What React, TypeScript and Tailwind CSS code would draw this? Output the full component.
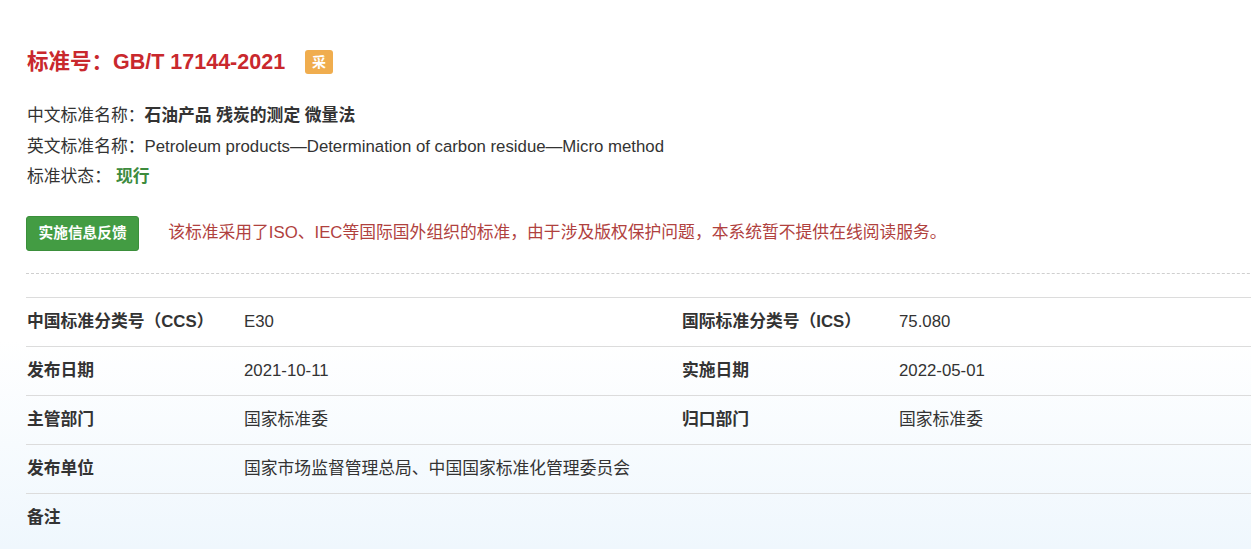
import React from "react";

const font = { fontFamily: '"Liberation Sans", Arial, "Noto Sans CJK SC", sans-serif' };

function Row({ cells }: { cells: [string, string][] }) {
  return (
    <div className="flex h-[49px] items-center border-t border-[#dcdcdc]">
      {cells.map(([k, v], i) => (
        <React.Fragment key={i}>
          <div className="w-[218px] shrink-0 pl-px font-bold text-[#333]">{k}</div>
          <div className={i === 0 && cells.length > 1 ? "w-[437px] shrink-0" : "flex-1"}>{v}</div>
        </React.Fragment>
      ))}
    </div>
  );
}

export default function App() {
  return (
    <div
      className="h-[549px] w-[1251px] overflow-hidden bg-gradient-to-b from-white from-[62%] to-[#eff7fd] text-[16.8px] text-[#333]"
      style={font}
    >
      <div className="w-[1450px] pl-[26px] pt-[47px]">
        <div className="flex h-[30px] items-center">
          <h1 className="pl-px text-[21.5px] font-bold leading-[30px] text-[#c9282d]">标准号：GB/T 17144-2021</h1>
          <span className="ml-[20px] flex h-[24px] w-[28px] items-center justify-center rounded-[3px] bg-[#f0ad4e] text-[14px] font-bold text-white">
            采
          </span>
        </div>
        <div className="mt-[24px] pl-px leading-[30.5px]">
          <div>
            中文标准名称：<span className="font-bold">石油产品 残炭的测定 微量法</span>
          </div>
          <div>英文标准名称：Petroleum products—Determination of carbon residue—Micro method</div>
          <div>
            标准状态：<span className="ml-[5px] font-bold text-[#3d8b3d]">现行</span>
          </div>
        </div>
        <div className="mt-[23px] flex items-center">
          <button className="h-[35px] rounded-[3px] border border-[#3b8f3b] bg-[#439c43] px-[11.5px] text-[14.7px] font-bold text-white">
            实施信息反馈
          </button>
          <span className="ml-[29px] text-[#b0413e]">
            该标准采用了ISO、IEC等国际国外组织的标准，由于涉及版权保护问题，本系统暂不提供在线阅读服务。
          </span>
        </div>
        <div className="mt-[22px] border-t border-dashed border-[#cfcfcf]" />
        <div className="mt-[23px]">
          <Row cells={[["中国标准分类号（CCS）", "E30"], ["国际标准分类号（ICS）", "75.080"]]} />
          <Row cells={[["发布日期", "2021-10-11"], ["实施日期", "2022-05-01"]]} />
          <Row cells={[["主管部门", "国家标准委"], ["归口部门", "国家标准委"]]} />
          <Row cells={[["发布单位", "国家市场监督管理总局、中国国家标准化管理委员会"]]} />
          <Row cells={[["备注", ""]]} />
        </div>
      </div>
    </div>
  );
}
